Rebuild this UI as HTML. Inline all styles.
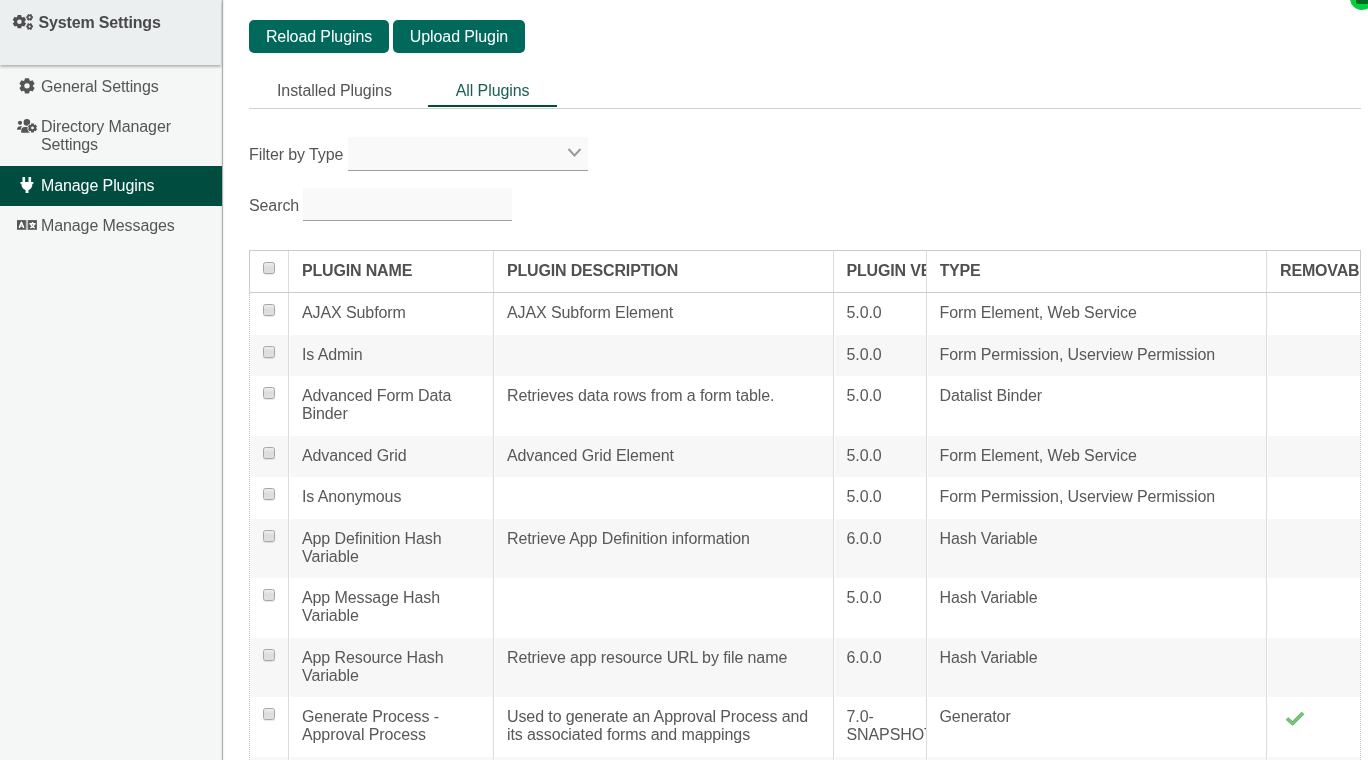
<!DOCTYPE html>
<html><head><meta charset="utf-8">
<style>
*{box-sizing:border-box;margin:0;padding:0}
html,body{width:1368px;height:760px;overflow:hidden;background:#fff;font-family:"Liberation Sans",sans-serif;font-size:16px;color:#585858;letter-spacing:-0.1px;-webkit-font-smoothing:antialiased}
.abs{position:absolute}
#side{position:absolute;left:0;top:0;width:222px;height:760px;background:#f5f7f7}
#sideline{position:absolute;left:222px;top:0;width:1px;height:760px;background:#b0b0b0;box-shadow:0 0 2px rgba(0,0,0,.25)}
#shead{position:absolute;left:0;top:0;width:221px;height:65px;background:#ebeff0;box-shadow:0 1.5px 3px rgba(0,0,0,.33)}
.stitle{position:absolute;left:38.5px;top:14px;font-weight:700;font-size:16px;color:#4a4a4a;line-height:18px;letter-spacing:-0.15px}
.mi{position:absolute;left:41px;font-size:16px;line-height:18px;color:#555;white-space:nowrap}
#active{position:absolute;left:0;top:166px;width:222px;height:40px;background:#004d40}
.btn{position:absolute;top:20px;height:33px;background:#00695c;border-radius:5px;color:#fff;font-size:16px;line-height:33px;text-align:center}
.tab{position:absolute;top:81px;font-size:16px;line-height:20px;white-space:nowrap}
.lbl{position:absolute;left:249px;font-size:16px;line-height:18px;white-space:nowrap;color:#555}
.field{position:absolute;background:#f9f9f9;border-bottom:1px solid #9e9e9e}
#tbl{position:absolute;left:249px;top:250px;width:1112px}
.row{position:absolute;left:251px;width:1109px}
.gray{background:#f7f7f7}
.vl{position:absolute;width:2px;border-left:1px solid #dcdcdc;background:#fff}
.cell{position:absolute;white-space:nowrap;overflow:hidden;line-height:18px}
.th{font-weight:700;color:#505050;letter-spacing:-0.17px}
.cb{position:absolute;left:263px;width:12px;height:12px;border:1px solid #a6a6a6;border-radius:2.5px;background:linear-gradient(#eeeeee,#dddddd 45%,#e0e0e0);box-shadow:0 1px 1px rgba(0,0,0,.10)}
</style></head><body><div id="wrap" style="position:absolute;left:0;top:0;width:1368px;height:760px;overflow:hidden;will-change:transform">
<div id="side"></div>
<div id="shead"></div>
<div id="sideline"></div>
<div class="stitle">System Settings</div>
<div class="mi" style="top:78px">General Settings</div>
<div class="mi" style="top:118px">Directory Manager<br>Settings</div>
<div id="active"></div>
<div class="mi" style="top:177px;color:#fff">Manage Plugins</div>
<div class="mi" style="top:217px">Manage Messages</div>

<!--ICONS-->
<svg class="abs" style="left:0;top:0" width="40" height="40"><path fill="#4f4f4f" fill-rule="evenodd" d="M17.24 16.86 L17.63 15.03 L21.17 15.03 L21.56 16.86 L22.51 17.41 L24.29 16.83 L26.06 19.90 L24.67 21.15 L24.67 22.25 L26.06 23.50 L24.29 26.57 L22.51 25.99 L21.56 26.54 L21.17 28.37 L17.63 28.37 L17.24 26.54 L16.29 25.99 L14.51 26.57 L12.74 23.50 L14.13 22.25 L14.13 21.15 L12.74 19.90 L14.51 16.83 L16.29 17.41Z M17.10 21.70 a2.3 2.3 0 1 0 4.60 0 a2.3 2.3 0 1 0 -4.60 0Z M29.78 14.71 L30.43 13.90 L32.11 14.86 L31.74 15.83 L31.94 16.16 L32.96 16.32 L32.97 18.26 L31.95 18.42 L31.76 18.75 L32.13 19.72 L30.46 20.69 L29.80 19.89 L29.42 19.89 L28.77 20.70 L27.09 19.74 L27.46 18.77 L27.26 18.44 L26.24 18.28 L26.23 16.34 L27.25 16.18 L27.44 15.85 L27.07 14.88 L28.74 13.91 L29.40 14.71Z M28.50 17.30 a1.1 1.1 0 1 0 2.20 0 a1.1 1.1 0 1 0 -2.20 0Z M29.78 23.91 L30.43 23.10 L32.11 24.06 L31.74 25.03 L31.94 25.36 L32.96 25.52 L32.97 27.46 L31.95 27.62 L31.76 27.95 L32.13 28.92 L30.46 29.89 L29.80 29.09 L29.42 29.09 L28.77 29.90 L27.09 28.94 L27.46 27.97 L27.26 27.64 L26.24 27.48 L26.23 25.54 L27.25 25.38 L27.44 25.05 L27.07 24.08 L28.74 23.11 L29.40 23.91Z M28.50 26.50 a1.1 1.1 0 1 0 2.20 0 a1.1 1.1 0 1 0 -2.20 0Z"/></svg>
<svg class="abs" style="left:0;top:60px" width="40" height="40" viewBox="0 60 40 40"><path fill="#555" fill-rule="evenodd" d="M24.51 80.28 L24.97 78.22 L29.03 78.22 L29.49 80.28 L30.58 80.91 L32.60 80.27 L34.63 83.79 L33.07 85.22 L33.07 86.48 L34.63 87.91 L32.60 91.43 L30.58 90.79 L29.49 91.42 L29.03 93.48 L24.97 93.48 L24.51 91.42 L23.42 90.79 L21.40 91.43 L19.37 87.91 L20.93 86.48 L20.93 85.22 L19.37 83.79 L21.40 80.27 L23.42 80.91Z M24.30 85.85 a2.7 2.7 0 1 0 5.40 0 a2.7 2.7 0 1 0 -5.40 0Z"/></svg>
<svg class="abs" style="left:0;top:100px" width="40" height="40" viewBox="0 100 40 40"><path fill="#555" d="M20 122.8m-2.1 0a2.1 2.1 0 1 0 4.2 0a2.1 2.1 0 1 0 -4.2 0Z M26.9 122.4m-3.3 0a3.3 3.3 0 1 0 6.6 0a3.3 3.3 0 1 0 -6.6 0Z M17 129.8 C17 127.3 18.5 126.2 20.5 126.2 L22.2 126.2 C21.2 127.2 20.8 128.5 20.8 129.8Z M21.2 132.8 L21.2 130.6 C21.2 128.5 22.6 127.1 24.8 127.1 L28.4 127.1 C27.6 128.5 27.6 130.6 29.2 132 L29.9 132.8Z"/><path fill="#555" fill-rule="evenodd" stroke="#f5f7f7" stroke-width="1.2" paint-order="stroke" d="M30.88 124.80 L31.11 123.41 L33.89 123.41 L34.12 124.80 L34.38 124.95 L35.69 124.45 L37.08 126.86 L36.00 127.75 L36.00 128.05 L37.08 128.94 L35.69 131.35 L34.38 130.85 L34.12 131.00 L33.89 132.39 L31.11 132.39 L30.88 131.00 L30.62 130.85 L29.31 131.35 L27.92 128.94 L29.00 128.05 L29.00 127.75 L27.92 126.86 L29.31 124.45 L30.62 124.95Z M31.10 127.90 a1.4 1.4 0 1 0 2.80 0 a1.4 1.4 0 1 0 -2.80 0Z"/></svg>
<svg class="abs" style="left:0;top:170px" width="40" height="30" viewBox="0 170 40 30"><path fill="#fff" d="M22.5 177.1h2.6v5h-2.6z M28.5 177.1h2.6v5h-2.6z M20.4 182.1h13v1.7h-1 C32.4 187.5 30.8 189.4 28.5 190.1 V193 h-2.9 V190.1 C23.2 189.4 21.5 187.5 21.4 183.8 h-1z"/></svg>
<svg class="abs" style="left:0;top:210px" width="40" height="30" viewBox="0 210 40 30"><rect x="17" y="220.1" width="8.9" height="9.7" fill="#555"/><rect x="25.9" y="220.1" width="2.2" height="9.7" fill="#bdbdbd"/><rect x="28.1" y="220.1" width="8.8" height="9.7" fill="#555"/><path d="M19.2 227.9 L21.45 222.3 L23.7 227.9" fill="none" stroke="#fff" stroke-width="1.5" stroke-linejoin="round"/><path d="M20.3 226.1h2.3" stroke="#fff" stroke-width="1.1"/><path d="M29.4 223.7h6.2 M32.5 222.1v1.6 M30.6 223.9 C31.2 226.2 32.8 227.4 34.8 227.9 M34.4 223.9 C33.8 226.2 32.2 227.4 30.2 227.9" fill="none" stroke="#fff" stroke-width="1.4"/></svg>
<!--/ICONS-->
<div class="btn" style="left:249px;width:140px">Reload Plugins</div>
<div class="btn" style="left:393px;width:132px">Upload Plugin</div>

<div class="tab" style="left:277px;color:#555">Installed Plugins</div>
<div class="tab" style="left:455.8px;color:#1b5e50">All Plugins</div>
<div class="abs" style="left:428px;top:105px;width:129px;height:2px;background:#004d40"></div>
<div class="abs" style="left:249px;top:108px;width:1112px;height:1px;background:#d0d0d0"></div>

<div class="lbl" style="top:146px">Filter by Type</div>
<div class="field" style="left:348px;top:137px;width:240px;height:34px"></div>
<div class="lbl" style="top:197px">Search</div>
<div class="field" style="left:303px;top:188px;width:209px;height:33px"></div>

<svg class="abs" style="left:566px;top:146px" width="18" height="14" viewBox="0 0 18 14"><path d="M2.5 3 L8.5 9.5 L14.5 3" fill="none" stroke="#9a9a9a" stroke-width="2"/></svg>
<div class="abs" style="left:1350.3px;top:-13.7px;width:23.4px;height:23.4px;border-radius:50%;background:#00d040"></div>
<div class="abs" style="left:1356px;top:-4px;width:12px;height:7.8px;border-radius:1.5px;background:#006a20"></div>
<div id="tbl"></div>
<div class="abs" style="left:249px;top:250px;width:1112px;height:1px;background:#cbcbcb;z-index:2"></div>
<div class="abs" style="left:249px;top:292px;width:1112px;height:1px;background:#cbcbcb;z-index:2"></div>
<div class="abs" style="left:249px;top:250px;width:1px;height:43px;background:#cbcbcb"></div>
<div class="abs" style="left:1360px;top:250px;width:1px;height:43px;background:#cbcbcb"></div>
<div class="row gray" style="top:334.5px;height:41.5px"></div>
<div class="row gray" style="top:435.5px;height:41.5px"></div>
<div class="row gray" style="top:518.5px;height:59.5px"></div>
<div class="row gray" style="top:637.5px;height:59.5px"></div>
<div class="row gray" style="top:756.5px;height:43.5px"></div>
<div class="abs" style="left:249px;top:293px;width:1px;height:467px;border-left:1px dotted #c4c4c4"></div>
<div class="abs" style="left:1360px;top:293px;width:1px;height:467px;border-left:1px dotted #c4c4c4"></div>
<div class="vl" style="left:288px;top:251px;height:509px"></div>
<div class="vl" style="left:493px;top:251px;height:509px"></div>
<div class="vl" style="left:833px;top:251px;height:509px"></div>
<div class="vl" style="left:926px;top:251px;height:509px"></div>
<div class="vl" style="left:1266px;top:251px;height:509px"></div>
<div class="cb" style="top:262px"></div>
<div class="cell th" style="left:302px;top:262px;width:190px">PLUGIN NAME</div>
<div class="cell th" style="left:507px;top:262px;width:325px">PLUGIN DESCRIPTION</div>
<div class="cell th" style="left:846.5px;top:262px;width:79px">PLUGIN VERSION</div>
<div class="cell th" style="left:939.5px;top:262px;width:325px">TYPE</div>
<div class="cell th" style="left:1280px;top:262px;width:79px">REMOVABLE</div>
<div class="cb" style="top:304px"></div>
<div class="cell" style="left:302px;top:304.3px;width:190px">AJAX Subform</div>
<div class="cell" style="left:507px;top:304.3px;width:325px">AJAX Subform Element</div>
<div class="cell" style="left:846.5px;top:304.3px;width:79px">5.0.0</div>
<div class="cell" style="left:939.5px;top:304.3px;width:325px">Form Element, Web Service</div>
<div class="cb" style="top:345.5px"></div>
<div class="cell" style="left:302px;top:345.8px;width:190px">Is Admin</div>
<div class="cell" style="left:846.5px;top:345.8px;width:79px">5.0.0</div>
<div class="cell" style="left:939.5px;top:345.8px;width:325px">Form Permission, Userview Permission</div>
<div class="cb" style="top:387px"></div>
<div class="cell" style="left:302px;top:387.3px;width:190px">Advanced Form Data<br>Binder</div>
<div class="cell" style="left:507px;top:387.3px;width:325px">Retrieves data rows from a form table.</div>
<div class="cell" style="left:846.5px;top:387.3px;width:79px">5.0.0</div>
<div class="cell" style="left:939.5px;top:387.3px;width:325px">Datalist Binder</div>
<div class="cb" style="top:446.5px"></div>
<div class="cell" style="left:302px;top:446.8px;width:190px">Advanced Grid</div>
<div class="cell" style="left:507px;top:446.8px;width:325px">Advanced Grid Element</div>
<div class="cell" style="left:846.5px;top:446.8px;width:79px">5.0.0</div>
<div class="cell" style="left:939.5px;top:446.8px;width:325px">Form Element, Web Service</div>
<div class="cb" style="top:488px"></div>
<div class="cell" style="left:302px;top:488.3px;width:190px">Is Anonymous</div>
<div class="cell" style="left:846.5px;top:488.3px;width:79px">5.0.0</div>
<div class="cell" style="left:939.5px;top:488.3px;width:325px">Form Permission, Userview Permission</div>
<div class="cb" style="top:529.5px"></div>
<div class="cell" style="left:302px;top:529.8px;width:190px">App Definition Hash<br>Variable</div>
<div class="cell" style="left:507px;top:529.8px;width:325px">Retrieve App Definition information</div>
<div class="cell" style="left:846.5px;top:529.8px;width:79px">6.0.0</div>
<div class="cell" style="left:939.5px;top:529.8px;width:325px">Hash Variable</div>
<div class="cb" style="top:589px"></div>
<div class="cell" style="left:302px;top:589.3px;width:190px">App Message Hash<br>Variable</div>
<div class="cell" style="left:846.5px;top:589.3px;width:79px">5.0.0</div>
<div class="cell" style="left:939.5px;top:589.3px;width:325px">Hash Variable</div>
<div class="cb" style="top:648.5px"></div>
<div class="cell" style="left:302px;top:648.8px;width:190px">App Resource Hash<br>Variable</div>
<div class="cell" style="left:507px;top:648.8px;width:325px">Retrieve app resource URL by file name</div>
<div class="cell" style="left:846.5px;top:648.8px;width:79px">6.0.0</div>
<div class="cell" style="left:939.5px;top:648.8px;width:325px">Hash Variable</div>
<div class="cb" style="top:708px"></div>
<div class="cell" style="left:302px;top:708.3px;width:190px">Generate Process -<br>Approval Process</div>
<div class="cell" style="left:507px;top:708.3px;width:325px">Used to generate an Approval Process and<br>its associated forms and mappings</div>
<div class="cell" style="left:846.5px;top:708.3px;width:79px">7.0-<br>SNAPSHOT</div>
<div class="cell" style="left:939.5px;top:708.3px;width:325px">Generator</div>
<svg class="abs" style="left:1284px;top:711px" width="22" height="16" viewBox="0 0 22 16"><path d="M3 7.5 L8.5 12.5 L19 2" fill="none" stroke="#5aae5a" stroke-width="3.6" stroke-linejoin="round"/><path d="M3 7.5 L8.5 12.5 L19 2" fill="none" stroke="#7cc67b" stroke-width="2"/></svg>
</div></body></html>
